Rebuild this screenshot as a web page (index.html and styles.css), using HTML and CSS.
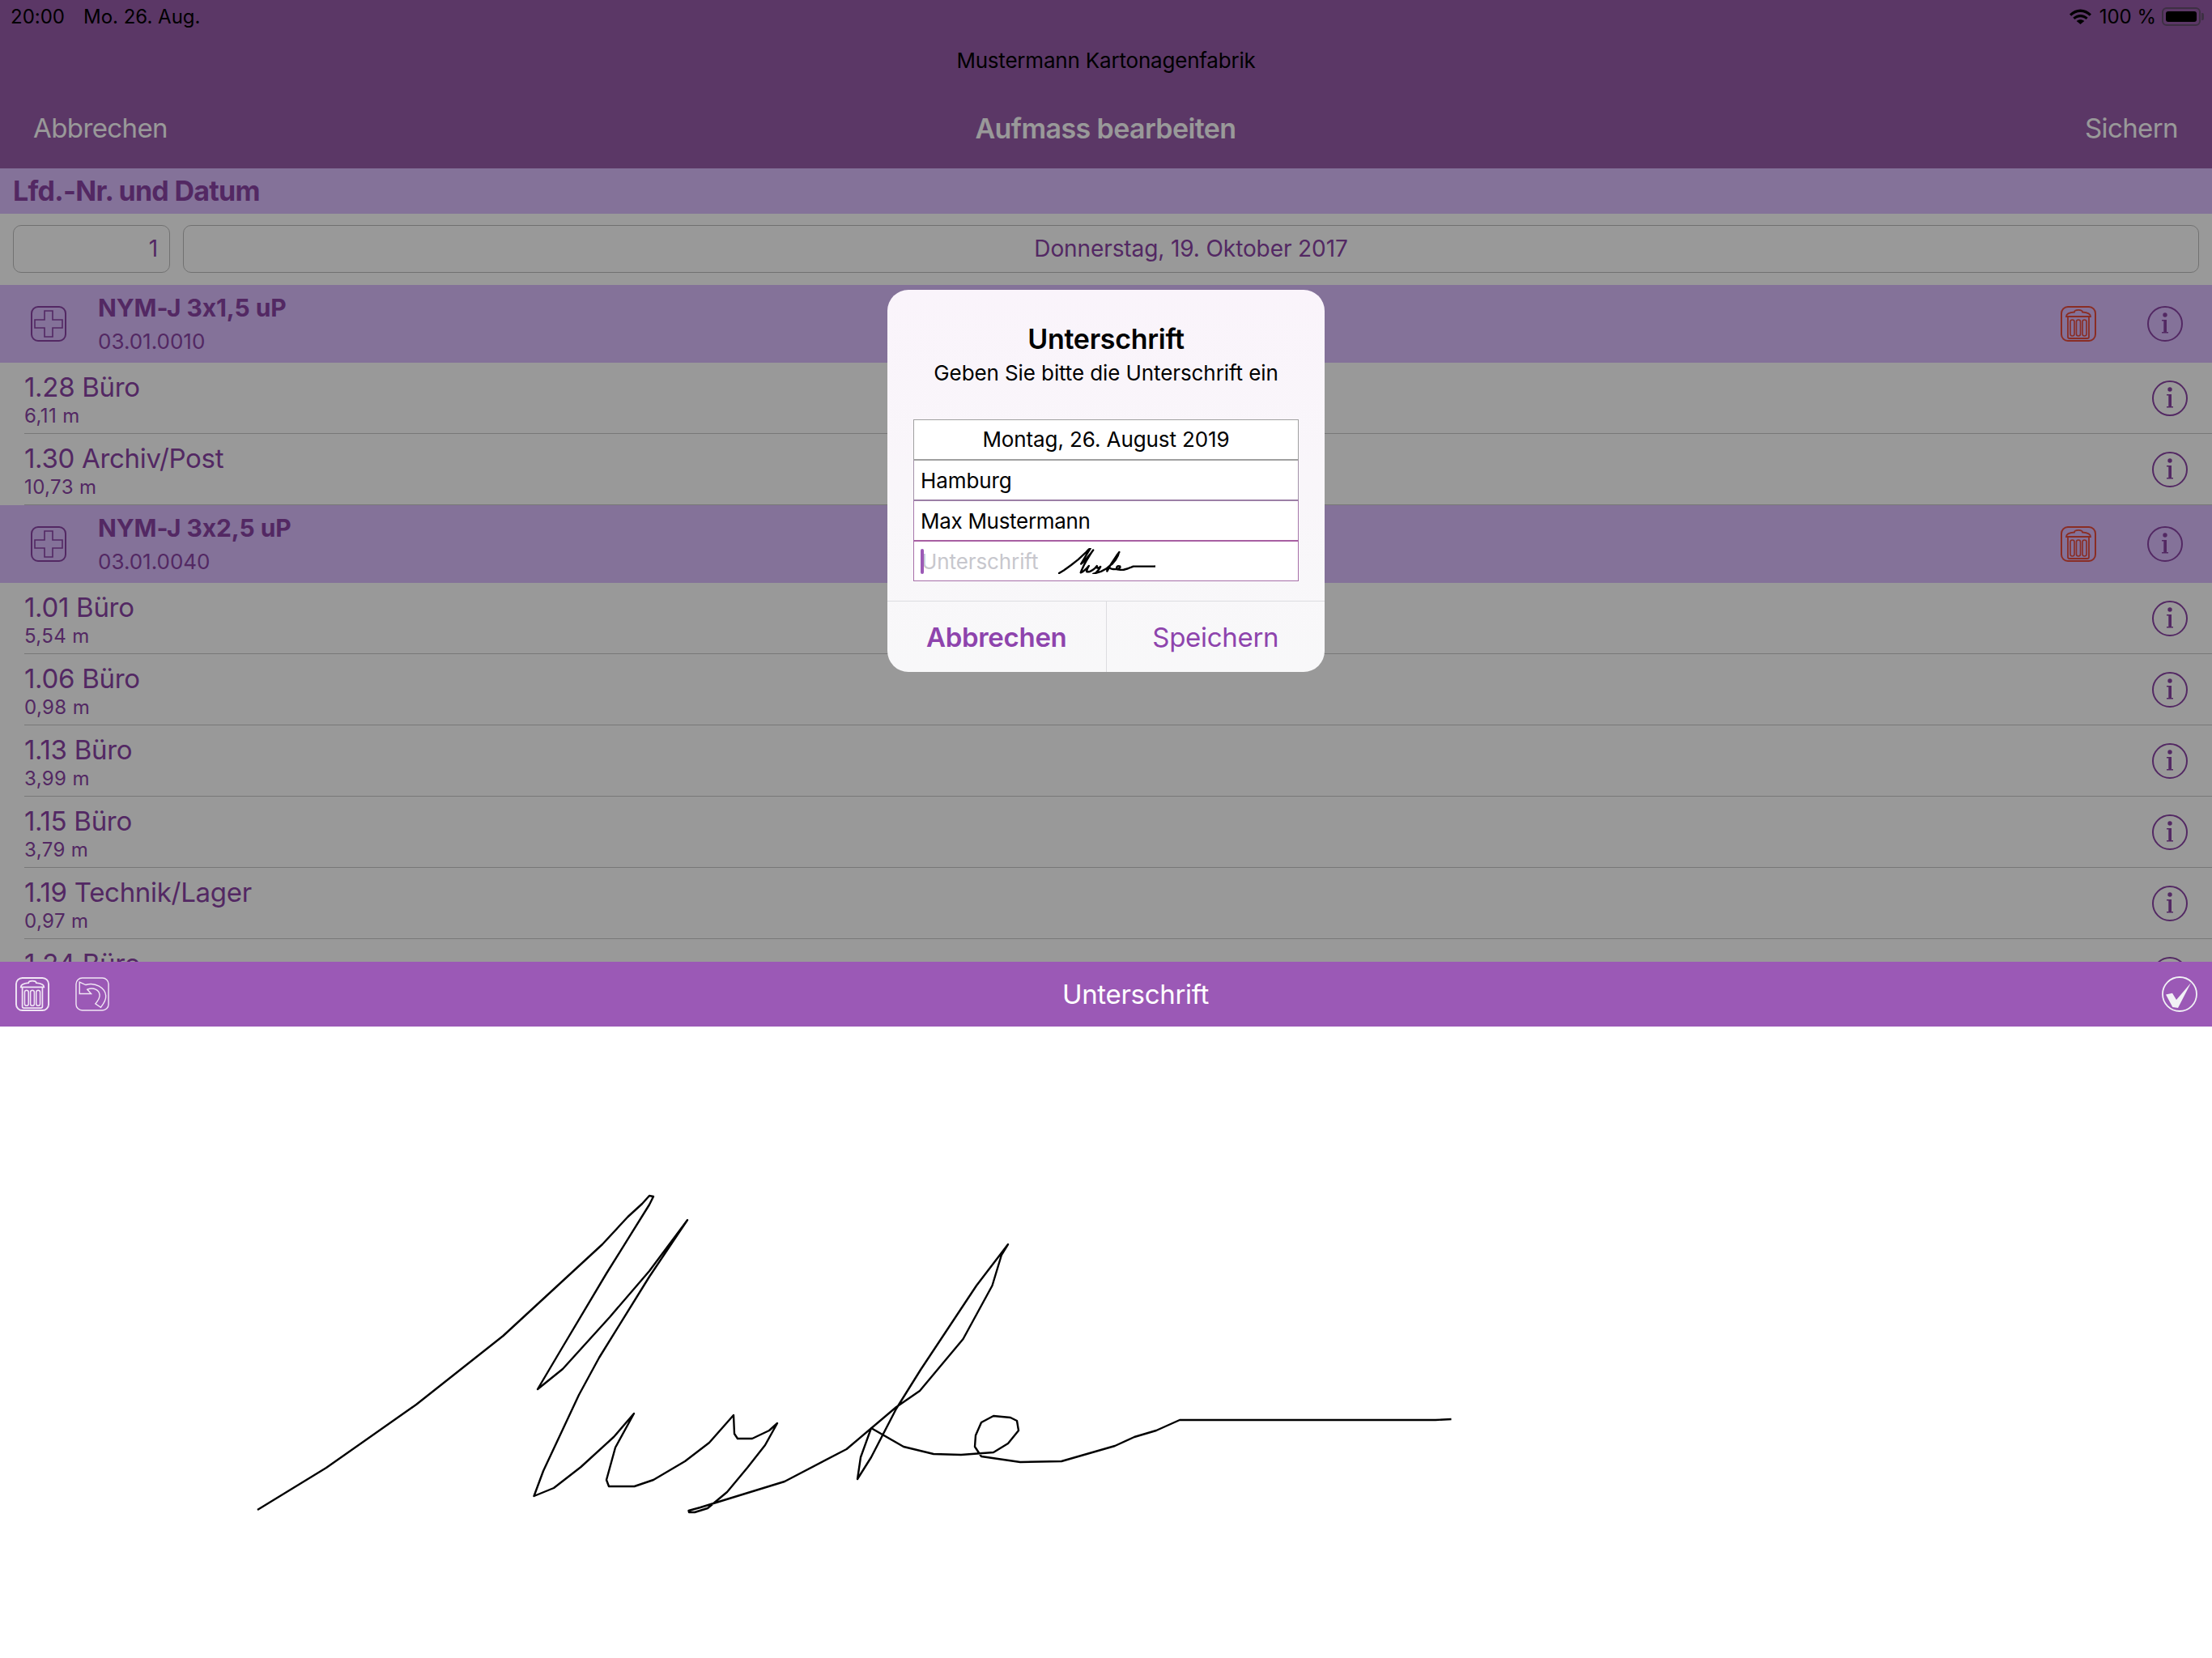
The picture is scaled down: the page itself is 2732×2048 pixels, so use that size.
FILE: index.html
```html
<!DOCTYPE html>
<html lang="de">
<head>
    <meta charset="UTF-8">
    <title>Aufmass bearbeiten</title>
    <link rel="stylesheet" href="styles.css">
</head>
<body>
    <!-- shared icons -->
    <svg class="defs" width="0" height="0">
        <symbol id="ico-plus" viewBox="0 0 44 44">
            <rect x="1" y="1" width="42" height="42" rx="8" fill="none" stroke="currentColor" stroke-width="2"/>
            <path d="M17 6H27V17H39V27H27V38H17V27H5V17H17Z" fill="none" stroke="currentColor" stroke-width="1.6"/>
        </symbol>
        <symbol id="ico-trash" viewBox="0 0 44 44">
            <rect x="1" y="1" width="42" height="42" rx="8" fill="none" stroke="currentColor" stroke-width="2"/>
            <path d="M7 13C7 10 10 8 17 7.500C17 4 27 4 27 7.500C34 8 37 10 37 13Z" fill="none" stroke="currentColor" stroke-width="1.800"/>
            <path d="M9 13V38Q9 40 11 40H33Q35 40 35 38V13" fill="none" stroke="currentColor" stroke-width="1.800"/>
            <rect x="12" y="17" width="5" height="20" rx="2.500" fill="none" stroke="currentColor" stroke-width="1.600"/>
            <rect x="19.500" y="17" width="5" height="20" rx="2.500" fill="none" stroke="currentColor" stroke-width="1.600"/>
            <rect x="27" y="17" width="5" height="20" rx="2.500" fill="none" stroke="currentColor" stroke-width="1.600"/>
        </symbol>
        <symbol id="ico-info" viewBox="0 0 44 44">
            <circle cx="22" cy="22" r="21" fill="none" stroke="currentColor" stroke-width="2"/>
            <circle cx="22" cy="11" r="2.700" fill="currentColor"/>
            <path d="M18 17H24V32H26V33.500H18V32H20.300V18.500H18Z" fill="currentColor"/>
        </symbol>
        <symbol id="ico-undo" viewBox="0 0 44 44">
            <rect x="1" y="1" width="42" height="42" rx="8" fill="none" stroke="currentColor" stroke-width="1.500"/>
            <path d="M5.500 6.500V21.500H20.500L15.500 16C24 12.500 31 17 31.500 23C32 27 29 31 26 34.500L33 39C37 34 40 29 39.500 24C38.500 14 26 6 13.500 10Z" fill="none" stroke="currentColor" stroke-width="1.500"/>
        </symbol>
    </svg>

    <div class="main">
        <header class="navbar">
            <div class="status">
                <div class="status-left"><span>20:00</span><span>Mo. 26. Aug.</span></div>
                <div class="status-right">
                    <svg class="wifi" viewBox="0 0 27 19" width="27" height="19">
                        <path d="M0 6.500C7.500 -1.500 19.500 -1.500 27 6.500L24.800 8.800C18.500 2.300 8.500 2.300 2.200 8.800Z"/>
                        <path d="M4.300 10.800C9.500 5.600 17.500 5.600 22.700 10.800L20.500 13C16.500 9.200 10.500 9.200 6.500 13Z"/>
                        <path d="M8.700 15.100C11.500 12.500 15.500 12.500 18.300 15.100L13.500 19Z"/>
                    </svg>
                    <span>100 %</span>
                    <div class="battery"><div class="battery-fill"></div></div>
                    <div class="battery-nub"></div>
                </div>
            </div>
            <div class="company">Mustermann Kartonagenfabrik</div>
            <div class="nav-row">
                <a class="nav-btn">Abbrechen</a>
                <div class="nav-title">Aufmass bearbeiten</div>
                <a class="nav-btn nav-btn-right">Sichern</a>
            </div>
        </header>

        <div class="section-head">Lfd.-Nr. und Datum</div>
        <div class="field-row">
            <div class="box box-nr">1</div>
            <div class="box box-date">Donnerstag, 19. Oktober 2017</div>
        </div>

        <div class="group">
            <svg class="ico"><use href="#ico-plus"/></svg>
            <div class="group-text"><b>NYM-J 3x1,5 uP</b><span>03.01.0010</span></div>
            <svg class="ico ico-red"><use href="#ico-trash"/></svg>
            <svg class="ico"><use href="#ico-info"/></svg>
        </div>
        <div class="row">
            <div class="row-text"><div class="name">1.28 Büro</div><div class="len">6,11 m</div></div>
            <svg class="ico"><use href="#ico-info"/></svg>
        </div>
        <div class="row">
            <div class="row-text"><div class="name">1.30 Archiv/Post</div><div class="len">10,73 m</div></div>
            <svg class="ico"><use href="#ico-info"/></svg>
        </div>

        <div class="group">
            <svg class="ico"><use href="#ico-plus"/></svg>
            <div class="group-text"><b>NYM-J 3x2,5 uP</b><span>03.01.0040</span></div>
            <svg class="ico ico-red"><use href="#ico-trash"/></svg>
            <svg class="ico"><use href="#ico-info"/></svg>
        </div>
        <div class="row">
            <div class="row-text"><div class="name">1.01 Büro</div><div class="len">5,54 m</div></div>
            <svg class="ico"><use href="#ico-info"/></svg>
        </div>
        <div class="row">
            <div class="row-text"><div class="name">1.06 Büro</div><div class="len">0,98 m</div></div>
            <svg class="ico"><use href="#ico-info"/></svg>
        </div>
        <div class="row">
            <div class="row-text"><div class="name">1.13 Büro</div><div class="len">3,99 m</div></div>
            <svg class="ico"><use href="#ico-info"/></svg>
        </div>
        <div class="row">
            <div class="row-text"><div class="name">1.15 Büro</div><div class="len">3,79 m</div></div>
            <svg class="ico"><use href="#ico-info"/></svg>
        </div>
        <div class="row">
            <div class="row-text"><div class="name">1.19 Technik/Lager</div><div class="len">0,97 m</div></div>
            <svg class="ico"><use href="#ico-info"/></svg>
        </div>
        <div class="row">
            <div class="row-text"><div class="name">1.24 Büro</div><div class="len">2,40 m</div></div>
            <svg class="ico"><use href="#ico-info"/></svg>
        </div>

        <!-- dimmed layer with the alert -->
        <div class="overlay">
            <div class="alert">
                <div class="alert-title">Unterschrift</div>
                <div class="alert-msg">Geben Sie bitte die Unterschrift ein</div>
                <div class="alert-fields">
                    <div class="afield afield-date">Montag, 26. August 2019</div>
                    <div class="afield afield-b">Hamburg</div>
                    <div class="afield afield-c">Max Mustermann</div>
                    <div class="afield afield-d">
                        <span class="caret"></span>
                        <span class="placeholder">Unterschrift</span>
                        <svg class="sig-mini" viewBox="318 1477 1475 392" preserveAspectRatio="none"><use href="#sig-path"/></svg>
                    </div>
                </div>
                <div class="alert-btns">
                    <div class="alert-btn alert-btn-bold">Abbrechen</div>
                    <div class="alert-btn">Speichern</div>
                </div>
            </div>
        </div>
    </div>

    <div class="toolbar">
        <div class="tool-left">
            <svg class="tool-ico"><use href="#ico-trash"/></svg>
            <svg class="tool-ico"><use href="#ico-undo"/></svg>
        </div>
        <div class="tool-title">Unterschrift</div>
        <svg class="tool-check" viewBox="0 0 44 44">
            <circle cx="22" cy="22" r="21" fill="none" stroke="#f1f1f5" stroke-width="1.800"/>
            <path d="M5 22.500L13 20.700L18 29L36 8L20 39L13.300 38Z" fill="#f1f1f5"/>
        </svg>
    </div>

    <div class="sign-pad">
        <svg class="sig" viewBox="0 1268 2732 780" width="2732" height="780">
            <path id="sig-path" d="M318 1865L403 1813L514 1735L621.500 1650L744 1537L775.500 1503L793 1487L802 1477L807 1478L802 1488L749 1573L693 1667L664 1716L695 1691L753 1627L802 1570L849 1507L802 1577L740 1677L715 1723L671 1817L659.500 1848L684 1838L717.500 1812L758 1775L783 1746L760 1788L749 1828L752 1836L783.500 1836L807 1828L846 1805L876 1782L906 1748L907 1771L911 1777L929 1777L950 1767L960 1758L945 1785L923 1813L898 1843L874 1863L858 1868L851 1868L850.500 1866L865 1862L969 1830L1045.600 1790L1107 1738L1136 1718L1189.500 1654L1225.500 1588L1237 1550L1245 1537L1206 1588L1137 1692L1107 1740L1076 1800L1059 1827L1063 1800L1076 1764L1116 1787L1153 1796L1187 1797L1227 1794L1245 1783L1258 1767L1256 1755L1248 1751L1227 1749L1212 1757L1205 1773L1204 1787L1212 1799L1260 1806L1311 1805L1377 1786L1401 1775L1428 1767L1457 1754L1773 1754L1792.500 1753"/>
        </svg>
    </div>
</body>
</html>
```

FILE: styles.css
```css
* {
    box-sizing: border-box;
}

body {
    margin: 0;
    width: 2732px;
    height: 2048px;
    overflow: hidden;
    font-family: Inter, "Noto Sans", sans-serif;
    font-feature-settings: "calt" 0;
    background-color: #ffffff;
    color: #8a44a6;
}

.defs {
    position: absolute;
}

.main {
    position: relative;
    height: 1188px;
    overflow: hidden;
    background-color: #ffffff;
}

.overlay {
    position: absolute;
    left: 0;
    top: 0;
    width: 100%;
    height: 100%;
    background-color: rgba(0, 0, 0, 0.4);
    display: flex;
    align-items: center;
    justify-content: center;
}

/* top bar */
.navbar {
    height: 208px;
    background-color: #985cab;
    color: #ffffff;
}

.status {
    height: 40px;
    padding: 0 10px 0 13px;
    display: flex;
    justify-content: space-between;
    align-items: center;
    font-size: 24px;
    color: #000000;
}

.status-left {
    display: flex;
    gap: 23px;
}

.status-right {
    display: flex;
    align-items: center;
    gap: 10px;
}

.wifi {
    fill: #000000;
}

.battery {
    width: 48px;
    height: 23px;
    padding: 3px;
    border: 2px solid #665070;
    border-radius: 6px;
    margin-left: -3px;
}

.battery-fill {
    height: 100%;
    background-color: #000000;
    border-radius: 3px;
}

.battery-nub {
    width: 3px;
    height: 9px;
    margin-left: -9px;
    background-color: #665070;
    border-radius: 0 2px 2px 0;
}

.company {
    height: 70px;
    line-height: 70px;
    text-align: center;
    font-size: 26px;
    letter-spacing: -0.2px;
    color: #000000;
}

.nav-row {
    height: 96px;
    padding: 0 42px 0 41px;
    display: grid;
    grid-template-columns: 1fr auto 1fr;
    align-items: center;
    font-size: 33px;
    letter-spacing: -0.6px;
}

.nav-title {
    font-size: 34px;
    font-weight: 600;
}

.nav-btn-right {
    text-align: right;
}

/* header and fields */
.section-head {
    height: 56px;
    line-height: 56px;
    padding-left: 16px;
    background-color: #dcbeff;
    font-size: 34px;
    font-weight: 700;
    letter-spacing: -0.7px;
}

.field-row {
    height: 88px;
    padding: 14px 16px 15px 16px;
    display: flex;
    gap: 16px;
}

.box {
    height: 59px;
    line-height: 57px;
    border: 1.500px solid #bdbdbd;
    border-radius: 10px;
    font-size: 28px;
    letter-spacing: -0.1px;
}

.box-nr {
    width: 194px;
    padding-right: 14px;
    text-align: right;
}

.box-date {
    flex: 1;
    text-align: center;
}

/* list */
.group {
    height: 96px;
    padding: 0 36px 0 38px;
    background-color: #dcbeff;
    display: flex;
    align-items: center;
    gap: 39px;
}

.group-text {
    flex: 1;
    align-self: flex-start;
    padding-top: 10px;
    display: flex;
    flex-direction: column;
}

.group-text b {
    font-size: 30px;
    line-height: 36px;
    letter-spacing: -0.1px;
}

.group-text span {
    margin-top: 9px;
    font-size: 26px;
    line-height: 30px;
}

.group .ico-red {
    margin-right: 24px;
}

.ico {
    width: 44px;
    height: 44px;
    flex-shrink: 0;
}

.ico-red {
    color: #e74c3c;
}

.row {
    height: 88px;
    margin-left: 30px;
    padding-right: 30px;
    display: flex;
    align-items: center;
    border-bottom: 1.500px solid #c8c8c8;
}

.row-text {
    flex: 1;
    align-self: flex-start;
    padding-top: 10px;
}

.name {
    font-size: 33px;
    line-height: 40px;
    letter-spacing: -0.3px;
}

.len {
    margin-top: 1px;
    font-size: 24px;
    line-height: 30px;
    letter-spacing: 0.4px;
}

/* alert */
.alert {
    width: 540px;
    height: 472px;
    padding-top: 41px;
    background: linear-gradient(#faf4fb, #f8f8f9);
    border-radius: 26px;
    text-align: center;
    color: #000000;
    display: flex;
    flex-direction: column;
}

.alert-title {
    font-size: 34px;
    font-weight: 600;
    line-height: 40px;
    letter-spacing: -0.3px;
}

.alert-msg {
    margin-top: 6px;
    font-size: 26px;
    line-height: 32px;
    letter-spacing: -0.1px;
}

.alert-fields {
    margin: 41px 32px 24px 32px;
}

.afield {
    position: relative;
    height: 50px;
    padding-left: 8px;
    border: 1px solid #a0a0a0;
    background-color: #ffffff;
    display: flex;
    align-items: center;
    font-size: 26px;
    letter-spacing: -0.1px;
}

.afield-date {
    justify-content: center;
    padding-left: 0;
    padding-bottom: 1px;
}

.afield-b {
    border-top-color: #a0a0a0;
    border-bottom-color: #9c7fa6;
    border-left-color: #a392a9;
    border-right-color: #a392a9;
}

.afield-c {
    border-top-color: #9c7fa6;
    border-bottom-color: #a85fa2;
    border-left-color: #a678ab;
    border-right-color: #a678ab;
    letter-spacing: -0.3px;
}

.afield-d {
    padding-left: 9px;
    border-color: #a76fa8;
    border-top-color: #a85fa2;
}

.caret {
    position: absolute;
    left: 8px;
    top: 9px;
    width: 4px;
    height: 31px;
    background-color: #9b59b6;
    border-radius: 2px;
}

.placeholder {
    color: #c7c7cd;
}

.sig-mini {
    width: 120px;
    height: 32px;
    margin-left: 25px;
}

.alert-btns {
    flex: 1;
    display: flex;
    border-top: 1px solid #dcdce0;
}

.alert-btn {
    flex: 1;
    display: flex;
    align-items: center;
    justify-content: center;
    font-size: 33px;
    letter-spacing: -0.3px;
    color: #8e44ad;
}

.alert-btn-bold {
    font-weight: 600;
    border-right: 1px solid #dcdce0;
}

/* bottom */
.toolbar {
    height: 80px;
    padding: 0 18px 0 19px;
    background-color: #9b59b6;
    display: flex;
    align-items: center;
    color: #f1e6f5;
}

.tool-left {
    display: flex;
    gap: 32px;
}

.tool-ico {
    width: 42px;
    height: 42px;
}

.tool-title {
    flex: 1;
    text-align: center;
    font-size: 33px;
    letter-spacing: -0.3px;
    color: #ffffff;
}

.tool-check {
    width: 44px;
    height: 44px;
}

.sign-pad {
    height: 780px;
    background-color: #ffffff;
}

.sig {
    display: block;
}

#sig-path {
    fill: none;
    stroke: #000000;
    stroke-width: 2.400px;
    stroke-linejoin: round;
    vector-effect: non-scaling-stroke;
}
```
